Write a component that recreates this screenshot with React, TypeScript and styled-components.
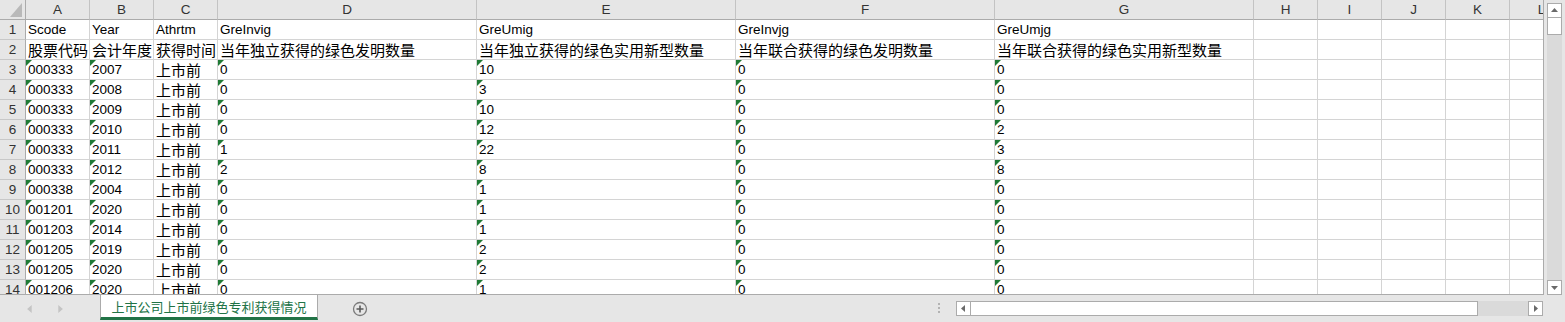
import React from 'react';
import styled, { createGlobalStyle } from 'styled-components';

const GlobalStyle = createGlobalStyle`
  body {
    margin: 0;
    background: #ffffff;
    overflow: hidden;
  }
`;

const COLS = [64, 64, 64, 259, 259, 259, 259, 64, 64, 64, 64, 64];
const LETTERS = ['A', 'B', 'C', 'D', 'E', 'F', 'G', 'H', 'I', 'J', 'K', 'L'];
const TEMPLATE = `26px ${COLS.map((w) => `${w}px`).join(' ')}`;

const LATIN = `'Liberation Sans', Arial, sans-serif`;
const CJK = `'Noto Sans CJK SC', 'Liberation Sans', sans-serif`;

const Window = styled.div`
  width: 1565px;
  height: 322px;
  display: flex;
  flex-direction: column;
  background: #e6e6e6;
  overflow: hidden;
`;

const Main = styled.div`
  display: flex;
  height: 295px;
`;

const Sheet = styled.div`
  width: 1544px;
  height: 295px;
  box-sizing: border-box;
  border-right: 1px solid #ababab;
  border-bottom: 1px solid #ababab;
  background: #fff;
  overflow: hidden;
`;

const Row = styled.div`
  display: grid;
  grid-template-columns: ${TEMPLATE};
  height: 20px;
`;

const Corner = styled.div`
  background: #e6e6e6;
  box-sizing: border-box;
  border-right: 1px solid #ababab;
  border-bottom: 1px solid #ababab;
  display: flex;
  align-items: flex-start;
  justify-content: flex-start;
`;

const ColHead = styled.div`
  background: #e6e6e6;
  box-sizing: border-box;
  border-right: 1px solid #c3c3c3;
  border-bottom: 1px solid #ababab;
  font-family: ${LATIN};
  font-size: 13.5px;
  line-height: 19px;
  color: #333;
  text-align: center;
  overflow: hidden;
  white-space: nowrap;
`;

const RowHead = styled.div`
  background: #e6e6e6;
  box-sizing: border-box;
  border-right: 1px solid #ababab;
  border-bottom: 1px solid #c8c8c8;
  font-family: ${LATIN};
  font-size: 13.5px;
  line-height: 19px;
  color: #333;
  text-align: center;
`;

const Cell = styled.div<{ $cjk?: boolean }>`
  position: relative;
  box-sizing: border-box;
  border-right: 1px solid #d4d4d4;
  border-bottom: 1px solid #d4d4d4;
  padding-left: 2px;
  font-family: ${(p) => (p.$cjk ? CJK : LATIN)};
  font-size: ${(p) => (p.$cjk ? '15px' : '13.5px')};
  line-height: 19px;
  color: #000;
  white-space: nowrap;
  overflow: hidden;
`;

const Flag = styled.span`
  position: absolute;
  top: 0;
  left: 0;
  width: 0;
  height: 0;
  border-top: 6px solid #1f7a35;
  border-right: 6px solid transparent;
`;

const VScroll = styled.div`
  width: 21px;
  box-sizing: border-box;
  padding: 3px 3px 0 3px;
  display: flex;
  flex-direction: column;
`;

const ScrollBtn = styled.div`
  width: 15px;
  height: 15px;
  box-sizing: border-box;
  border: 1px solid #ababab;
  background: #fff;
  display: flex;
  align-items: center;
  justify-content: center;
  flex-shrink: 0;
`;

const VThumb = styled.div`
  height: 17px;
  box-sizing: border-box;
  border: 1px solid #ababab;
  border-top: none;
  background: #fff;
`;

const VTrack = styled.div`
  flex: 1;
  background: #dadada;
`;

const BottomBar = styled.div`
  height: 27px;
  display: flex;
  align-items: flex-start;
`;

const NavGroup = styled.div`
  width: 100px;
  height: 27px;
  display: flex;
  align-items: center;
  padding-left: 26px;
  gap: 22px;
  box-sizing: border-box;
`;

const Tab = styled.div`
  width: 218px;
  height: 25px;
  box-sizing: border-box;
  background: #fff;
  border-left: 1px solid #ababab;
  border-right: 1px solid #ababab;
  border-bottom: 3px solid #217346;
  font-family: ${CJK};
  font-size: 13px;
  line-height: 23px;
  color: #217346;
  text-align: center;
  white-space: nowrap;
`;

const AddSheet = styled.div`
  margin-left: 34px;
  height: 27px;
  display: flex;
  align-items: center;
`;

const Spacer = styled.div`
  flex: 1;
`;

const Grip = styled.div`
  margin-top: 8px;
  margin-right: 16px;
  display: flex;
  flex-direction: column;
  gap: 2px;

  & span {
    width: 2px;
    height: 2px;
    background: #b3b3b3;
  }
`;

const HScroll = styled.div`
  width: 587px;
  height: 15px;
  margin-top: 6px;
  margin-right: 22px;
  display: flex;
`;

const HThumb = styled.div`
  width: 507px;
  box-sizing: border-box;
  border: 1px solid #ababab;
  border-left: none;
  background: #fff;
`;

const HTrack = styled.div`
  flex: 1;
  background: #dadada;
`;

const Arrow = ({ dir, color = '#6a6a6a', size = 7 }: { dir: 'up' | 'down' | 'left' | 'right'; color?: string; size?: number }) => {
  const pts = {
    up: '0,5 7,5 3.5,1',
    down: '0,2 7,2 3.5,6',
    left: '5,0 5,7 1,3.5',
    right: '2,0 2,7 6,3.5',
  }[dir];
  return (
    <svg width={size} height={size} viewBox="0 0 7 7">
      <polygon points={pts} fill={color} />
    </svg>
  );
};

const header = ['Scode', 'Year', 'Athrtm', 'GreInvig', 'GreUmig', 'GreInvjg', 'GreUmjg'];
const labels = [
  '股票代码',
  '会计年度',
  '获得时间',
  '当年独立获得的绿色发明数量',
  '当年独立获得的绿色实用新型数量',
  '当年联合获得的绿色发明数量',
  '当年联合获得的绿色实用新型数量',
];

const data: [string, string, string, string, string][] = [
  ['000333', '2007', '0', '10', '0'],
  ['000333', '2008', '0', '3', '0'],
  ['000333', '2009', '0', '10', '0'],
  ['000333', '2010', '0', '12', '2'],
  ['000333', '2011', '1', '22', '3'],
  ['000333', '2012', '2', '8', '8'],
  ['000338', '2004', '0', '1', '0'],
  ['001201', '2020', '0', '1', '0'],
  ['001203', '2014', '0', '1', '0'],
  ['001205', '2019', '0', '2', '0'],
  ['001205', '2020', '0', '2', '0'],
  ['001206', '2020', '0', '1', '0'],
];

const Blanks = ({ n }: { n: number }) => (
  <>
    {Array.from({ length: n }).map((_, i) => (
      <Cell key={i} />
    ))}
  </>
);

export default function App() {
  return (
    <>
      <GlobalStyle />
      <Window>
        <Main>
          <Sheet>
            <Row>
              <Corner>
                <svg width="24" height="19" viewBox="0 0 24 19">
                  <polygon points="22,3 22,17 10,17" fill="#b9b9b9" />
                </svg>
              </Corner>
              {LETTERS.map((l) => (
                <ColHead key={l}>{l}</ColHead>
              ))}
            </Row>
            <Row>
              <RowHead>1</RowHead>
              {header.map((h) => (
                <Cell key={h}>{h}</Cell>
              ))}
              <Blanks n={5} />
            </Row>
            <Row>
              <RowHead>2</RowHead>
              {labels.map((h) => (
                <Cell key={h} $cjk>
                  {h}
                </Cell>
              ))}
              <Blanks n={5} />
            </Row>
            {data.map(([code, year, d, e, g], i) => (
              <Row key={i}>
                <RowHead>{i + 3}</RowHead>
                <Cell>
                  <Flag />
                  {code}
                </Cell>
                <Cell>
                  <Flag />
                  {year}
                </Cell>
                <Cell $cjk>上市前</Cell>
                <Cell>
                  <Flag />
                  {d}
                </Cell>
                <Cell>
                  <Flag />
                  {e}
                </Cell>
                <Cell>
                  <Flag />0
                </Cell>
                <Cell>
                  <Flag />
                  {g}
                </Cell>
                <Blanks n={5} />
              </Row>
            ))}
          </Sheet>
          <VScroll>
            <ScrollBtn>
              <Arrow dir="up" />
            </ScrollBtn>
            <VThumb />
            <VTrack />
            <ScrollBtn>
              <Arrow dir="down" />
            </ScrollBtn>
          </VScroll>
        </Main>
        <BottomBar>
          <NavGroup>
            <Arrow dir="left" color="#c4c4c4" size={8} />
            <Arrow dir="right" color="#c4c4c4" size={8} />
          </NavGroup>
          <Tab>上市公司上市前绿色专利获得情况</Tab>
          <AddSheet>
            <svg width="16" height="16" viewBox="0 0 16 16">
              <circle cx="8" cy="8" r="6.5" fill="none" stroke="#7a7a7a" strokeWidth="1.3" />
              <path d="M8 4.5v7M4.5 8h7" stroke="#5a5a5a" strokeWidth="1.6" />
            </svg>
          </AddSheet>
          <Spacer />
          <Grip>
            <span />
            <span />
            <span />
          </Grip>
          <HScroll>
            <ScrollBtn>
              <Arrow dir="left" />
            </ScrollBtn>
            <HThumb />
            <HTrack />
            <ScrollBtn>
              <Arrow dir="right" />
            </ScrollBtn>
          </HScroll>
        </BottomBar>
      </Window>
    </>
  );
}
